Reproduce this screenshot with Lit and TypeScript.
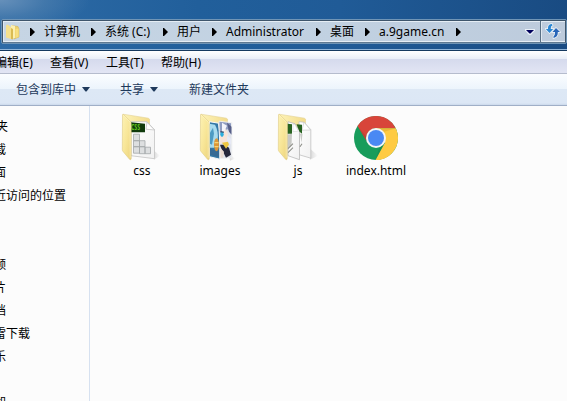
import { LitElement, html, css, svg, nothing } from "lit";
import { customElement, property } from "lit/decorators.js";
import { styleMap } from "lit/directives/style-map.js";

const arrow = html`<svg width="5" height="8" viewBox="0 0 5 8"><path d="M0 0h1l4 4-4 4H0z" fill="#000"/></svg>`;
const caret = html`<svg width="8" height="5" viewBox="0 0 8 5"><path d="M0 0h8L4.500 4.500h-1z" fill="#1e395b"/></svg>`;

const folderBack = svg`
  <path d="M3 2.500 L28.500 6.500 L29.500 7.500 V20 H10z" fill="url(#back)" stroke="#e3d193" stroke-width=".6"/>`;
const folderFront = svg`
  <path d="M2.500 3 Q2.600 2.300 3.500 2.800 L10.300 9.500 Q11.300 10.800 11.200 12 V47 Q10.800 49 9.500 47.500 L3.200 40 Q2.300 39 2.300 38z" fill="url(#front)" stroke="#dfcb84" stroke-width=".6"/>
  <path d="M3.200 3.500 L10.200 10.300 V46" fill="none" stroke="#fff7c9" stroke-width=".6"/>`;
const defs = svg`<defs>
  <linearGradient id="back" x1="0" y1="0" x2="1" y2="0"><stop offset="0" stop-color="#fdf3b8"/><stop offset="1" stop-color="#f3dc8c"/></linearGradient>
  <linearGradient id="front" x1="0" y1="0" x2="1" y2="1"><stop offset="0" stop-color="#fdf2b4"/><stop offset=".5" stop-color="#f8e698"/><stop offset="1" stop-color="#ecd37c"/></linearGradient>
  <linearGradient id="page" x1="0" y1="0" x2="1" y2="1"><stop offset="0" stop-color="#ffffff"/><stop offset="1" stop-color="#f1f1f1"/></linearGradient>
  <linearGradient id="shade" x1="0" y1="0" x2="1" y2="0"><stop offset="0" stop-color="#bbb" stop-opacity=".6"/><stop offset="1" stop-color="#bbb" stop-opacity="0"/></linearGradient>
</defs>`;

const cssInner = svg`
  <path d="M33 38 L40 44 L34 48z" fill="url(#shade)"/>
  <path d="M11 10 H27 L34.500 18 V47 L11 44z" fill="url(#page)" stroke="#c3c3c3" stroke-width=".8"/>
  <path d="M27 10.500 L34.500 18.300 L26 17.500z" fill="#fff" stroke="#bdbdbd" stroke-width=".7"/>
  <path d="M11 10.500 L25 12 V20.500 H11z" fill="#103a0c"/>
  <text x="11" y="18.500" font-size="8" font-weight="bold" textLength="9" lengthAdjust="spacingAndGlyphs" fill="#62c51b">CSS</text>
  <g fill="#dddfe0" stroke="#a3a7a9" stroke-width=".8">
    <path d="M13.500 22.500h6v6.500h-6zM13.500 29h6v6h-6zM13.500 35h6v6.500h-6zM19.500 29h5.500v6h-5.500zM19.500 35h5.500v7h-5.500zM25 35.500h5.500v6.500h-5.500z"/>
  </g>`;

const imagesInner = svg`
  <path d="M31 42 L37 47 L32 49z" fill="url(#shade)"/>
  <path d="M21 9.500 L33.800 11 V46 L21 47z" fill="#dfe2eb" stroke="#f0f0f0" stroke-width=".8"/>
  <path d="M21.500 10 L33 11.500 V21 L29 17 L25 24 L21.500 23z" fill="#8f9cc0"/>
  <path d="M29 11 L31 20 L33.500 23 V15z" fill="#565e88"/>
  <path d="M22 22 L27 16 L30 22 L29 31 L22 32z" fill="#f7e3d8"/>
  <path d="M24 11 L29 14 L24 24z" fill="#f3f4fb"/>
  <ellipse cx="24" cy="22.500" rx="1.700" ry="2.700" fill="#2baede"/>
  <path d="M22.500 20 L26 20.500" stroke="#323650" stroke-width="1"/>
  <path d="M21.500 33 L26 33 L31 36 L33 43 L28 46 L24 38z" fill="#26273a"/>
  <path d="M24 31 L28 37 L31 33 L30 30z" fill="#efc742"/>
  <path d="M22 36 L26 40 L25 46 H22z" fill="#e9d9cf"/>
  <path d="M29 24 L33 27 V33 L29 29z" fill="#e6e9f5"/>
  <path d="M11.500 10 L20.500 11.500 Q22 25 21.800 47.500 L11.500 45z" fill="#3478a6" stroke="#f8f8f8" stroke-width="1"/>
  <path d="M11.500 12 L17 13 Q21 20 19.500 29 L16 36 L11.500 36z" fill="#a9dbee"/>
  <path d="M12 21 L15 16 L16 22 L14 33 L12 32z" fill="#4e9bc3"/>
  <path d="M12 37 L18 39 L21 37 V45.500 L12 43z" fill="#376a94"/>
  <ellipse cx="18.500" cy="33" rx="2.500" ry="6.500" fill="#dd9637"/>
  <path d="M16.500 31h4M16.500 35h4" stroke="#f4d474" stroke-width="1.200"/>`;

const jsInner = svg`
  <path d="M33 36 L42 44 L34 48z" fill="url(#shade)"/>
  <path d="M23 10 L28 10.500 L34.800 18 V46.500 L23 43z" fill="url(#page)" stroke="#c2c2c2" stroke-width=".8"/>
  <path d="M28 10.500 L34.500 18.300 L26 18.500z" fill="#fff" stroke="#c2c2c2" stroke-width=".6"/>
  <path d="M12 10 L19 12 L23.500 19 V48 L12 44z" fill="url(#page)" stroke="#b9b9b9" stroke-width=".8"/>
  <path d="M11.500 12 L16 12.500 V22 H11.500zM20.500 12.500 L26 13 V22 L23.500 20z" fill="#286320"/>
  <path d="M11.500 23 L16 22 L15.500 34 L11.500 38zM24 22 L26.500 22 L25.500 31z" fill="#c8c9c5"/>
  <path d="M12 37 L17 32M12 41 L17 36M24 35 L26 32" stroke="#8f908a" stroke-width="1.100"/>
  <path d="M17 12.500 L19 13 L22.500 19.500 L17 20z" fill="#fff" stroke="#ccc" stroke-width=".5"/>`;

const chrome = html`<svg width="44" height="44" viewBox="0 0 44 44">
  <circle cx="22" cy="22" r="22" fill="#179c5b"/>
  <path d="M3.500 10.100 A22 22 0 0 1 41.700 12.200 H22 A10 10 0 0 0 12.800 25.500z" fill="#d8453a"/>
  <path d="M22 12.200 H41.700 A22 22 0 0 1 21.500 44 L31 26.500z" fill="#fecb43"/>
  <path d="M22 12.200 H41.700 L28 16.500z" fill="#d9a22d" opacity=".45"/>
  <path d="M12.800 25.500 L4 11 L12 20z" fill="#9b3f30" opacity=".4"/>
  <path d="M31 26.500 L21.500 44 L25.500 31z" fill="#187743" opacity=".3"/>
  <circle cx="22" cy="22" r="10" fill="#f5f5f5"/>
  <circle cx="22" cy="22" r="8" fill="#4a89f3"/>
</svg>`;

const folder = (inner: unknown) => html`<svg width="44" height="50" viewBox="0 1.300 44 50">${defs}${folderBack}${inner}${folderFront}</svg>`;

@customElement("address-bar")
class AddressBar extends LitElement {
  static styles = css`
    :host { display: block; height: 49px; box-sizing: border-box; padding: 19px 0 0 1px;
      background: radial-gradient(ellipse 90px 34px at 0 0, #6690ba 0%, rgba(85,132,177,.55) 50%, rgba(40,100,160,0) 100%),
        linear-gradient(90deg, #2e6ba6 0, #215f9b 35%, #205b97 60%, #194b82 100%); }
    .frame { box-sizing: border-box; height: 25px; border: 1px solid #7095b6; border-radius: 2px; }
    .bar { box-sizing: border-box; height: 23px; border: 1px solid #3f566c; border-bottom-color: #5f7991; display: flex; align-items: center;
      background: linear-gradient(90deg, #c6d5e4, #c1d1e1 60%, #bdcbdc); box-shadow: inset 0 1px #e5edf4, inset 0 -1px #e6eef5, inset 1px 0 #dfe8f0; }
    .icon { width: 14px; margin: 0 10px 0 3px; height: 16px; }
    svg { display: block; }
    .gap { width: 9px; }
    .crumb { display: flex; align-items: center; white-space: nowrap; color: #000; }
    .label { height: 18px; line-height: 18px; }
    .sep { width: 14px; padding-left: 11px; }
    .drop { margin-left: auto; width: 16px; }
    .refresh { box-sizing: border-box; width: 25px; height: 21px; border-left: 1px solid #596f84; padding: 2px 0 0 4px; box-shadow: inset 1px 0 #dfe8f0; }
  `;
  private crumbs: [string, number][] = [["计算机", 36], ["系统 (C:)", 47], ["用户", 24], ["Administrator", 79], ["桌面", 24], ["a.9game.cn", 66]];
  render() {
    return html`<div class="frame"><div class="bar">
      <div class="icon"><svg width="14" height="16" viewBox="0 0 14 16">
        <path d="M6 1.500 L12 2.500 L13 5 V13 L8 15z" fill="#ecd06c" stroke="#cfb052" stroke-width=".5"/>
        <path d="M5 1 L9 2 V14 L5 15z" fill="#fbefb0"/>
        <path d="M0 1.500 L1.500 .5 L5 3 V15 L0 13.500z" fill="#f5e08d"/>
        <path d="M5 4 L7 5 V15.500 L5 15z" fill="#dabb52"/>
        <path d="M9.500 5 L12.500 4.500 V13 L9.500 14z" fill="#f7df80"/></svg></div>
      ${arrow}
      <div class="gap"></div>
      ${this.crumbs.map(([t, w]) => html`<div class="crumb"><span class="label" style=${styleMap({ width: w + "px" })}>${t}</span><span class="sep">${arrow}</span></div>`)}
      <div class="drop"><svg width="12" height="8" viewBox="0 0 12 8"><path d="M1 1h10v1.500L7 7H5L1 2.500z" fill="#e9f0f7"/><path d="M2 2h8L6.500 5.500h-1z" fill="#00005c"/></svg></div>
      <div class="refresh"><svg width="16" height="16" viewBox="0 0 16 16">
        <g stroke="#eef5fb" stroke-width="1.400" paint-order="stroke">
          <path d="M7 1 Q3 1 3 5 V6 H.8 L4.500 10 L8.200 6 H5.800 V5 Q5.800 2.800 7.500 2.500z" fill="#2b86d2"/>
          <path d="M8.500 15 Q12.800 14 12.800 10 V9 H15 L11 5 L7.500 9 H10 V10 Q10 12 8.500 13.500z" fill="#2865b8"/>
        </g></svg></div>
    </div></div>`;
  }
}

@customElement("file-tile")
class FileTile extends LitElement {
  @property() name = "";
  @property({ attribute: false }) icon: unknown = nothing;
  static styles = css`
    :host { display: flex; flex-direction: column; align-items: center; width: 78px; }
    .pic { height: 50px; display: flex; align-items: center; justify-content: center; }
    svg { display: block; }
    .name { height: 18px; line-height: 18px; margin-top: -1px; font-size: 12px; white-space: nowrap; color: #000; }
  `;
  render() {
    return html`<div class="pic">${this.icon}</div><div class="name">${this.name}</div>`;
  }
}

@customElement("app-root")
class AppRoot extends LitElement {
  static styles = css`
    :host { display: flex; flex-direction: column; width: 567px; height: 401px; overflow: hidden; background: #fcfcfc;
      font: 12px "Noto Sans", "Noto Sans CJK SC", sans-serif; color: #000; }
    svg { display: block; }
    .menu { box-sizing: border-box; height: 25px; flex: none; border-top: 1px solid #8fb4d8; display: flex; align-items: center; padding-top: 2px;
      background: linear-gradient(#15395f 0 1px, #fff 1px, #e9eef7 9px, #d5daed 9px, #e2e5f4 23px, #b5bccd 23px); }
    .menu span, .tools span { white-space: nowrap; line-height: 18px; height: 18px; }
    .menu .m0 { margin-left: -5px; width: 55px; }
    .menu .m1 { width: 56px; }
    .menu .m2 { width: 55px; }
    .tools { box-sizing: border-box; height: 32px; flex: none; display: flex; align-items: center; color: #1e395b; padding: 0 0 1px 16px;
      background: linear-gradient(#fbfdff 0, #ecf4fc 15px, #dde8f5 15px, #dce7f5 29px, #cbd9eb 31px, #a0afc7 31px); }
    .tools .btn { display: flex; align-items: center; gap: 6px; }
    .b0 { width: 104px; }
    .b1 { width: 69px; }
    .body { flex: 1; display: flex; min-height: 0; }
    .nav { box-sizing: border-box; width: 90px; border-right: 1px solid #d6e1f0; padding-top: 9px; overflow: hidden; }
    .row { height: 23px; line-height: 23px; display: flex; justify-content: flex-end; white-space: nowrap; }
    .files { display: flex; padding: 7px 0 0 13px; }
  `;
  private rows: [string, number][] = [["收藏夹", 8], ["下载", 6], ["桌面", 6], ["最近访问的位置", 66], ["", 0], ["", 0], ["视频", 6], ["图片", 6], ["文档", 6], ["迅雷下载", 30], ["音乐", 6], ["", 0], ["计算机", 7]];
  render() {
    return html`
      <address-bar></address-bar>
      <div class="menu"><span class="m0">编辑(E)</span><span class="m1">查看(V)</span><span class="m2">工具(T)</span><span>帮助(H)</span></div>
      <div class="tools"><div class="btn b0"><span>包含到库中</span>${caret}</div><div class="btn b1"><span>共享</span>${caret}</div><span>新建文件夹</span></div>
      <div class="body">
        <div class="nav">${this.rows.map(([t, w]) => html`<div class="row" style=${styleMap({ width: w + "px" })}>${t}</div>`)}</div>
        <div class="files">
          <file-tile name="css" .icon=${folder(cssInner)}></file-tile>
          <file-tile name="images" .icon=${folder(imagesInner)}></file-tile>
          <file-tile name="js" .icon=${folder(jsInner)}></file-tile>
          <file-tile name="index.html" .icon=${chrome}></file-tile>
        </div>
      </div>`;
  }
}
